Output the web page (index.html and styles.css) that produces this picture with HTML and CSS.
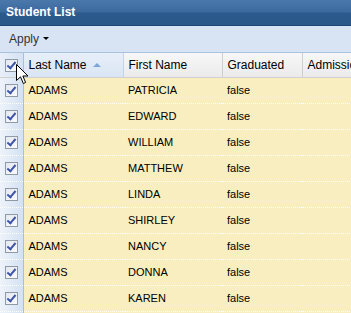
FILE: index.html
```html
<!DOCTYPE html>
<html lang="en">
<head>
  <meta charset="UTF-8" />
  <title>Student List</title>
  <link rel="stylesheet" href="styles.css">
</head>
<body>
  <div class="panel">
    <div class="title">Student List</div>
    <div class="toolbar">
      <span class="apply">Apply <span class="caret"></span></span>
    </div>

    <table class="grid">
      <colgroup>
        <col class="c-check">
        <col class="c-last">
        <col class="c-first">
        <col class="c-grad">
        <col class="c-adm">
      </colgroup>
      <thead>
        <tr>
          <th class="check-cell"><span class="box on"></span></th>
          <th class="sorted">Last Name <span class="sort-arrow"></span></th>
          <th>First Name</th>
          <th>Graduated</th>
          <th>Admission</th>
        </tr>
      </thead>
      <tbody>
        <tr><td class="check-cell"><span class="box on"></span></td><td>ADAMS</td><td>PATRICIA</td><td>false</td><td></td></tr>
        <tr><td class="check-cell"><span class="box on"></span></td><td>ADAMS</td><td>EDWARD</td><td>false</td><td></td></tr>
        <tr><td class="check-cell"><span class="box on"></span></td><td>ADAMS</td><td>WILLIAM</td><td>false</td><td></td></tr>
        <tr><td class="check-cell"><span class="box on"></span></td><td>ADAMS</td><td>MATTHEW</td><td>false</td><td></td></tr>
        <tr><td class="check-cell"><span class="box on"></span></td><td>ADAMS</td><td>LINDA</td><td>false</td><td></td></tr>
        <tr><td class="check-cell"><span class="box on"></span></td><td>ADAMS</td><td>SHIRLEY</td><td>false</td><td></td></tr>
        <tr><td class="check-cell"><span class="box on"></span></td><td>ADAMS</td><td>NANCY</td><td>false</td><td></td></tr>
        <tr><td class="check-cell"><span class="box on"></span></td><td>ADAMS</td><td>DONNA</td><td>false</td><td></td></tr>
        <tr><td class="check-cell"><span class="box on"></span></td><td>ADAMS</td><td>KAREN</td><td>false</td><td></td></tr>
        <tr><td class="check-cell"><span class="box on"></span></td><td>ADAMS</td><td>BETTY</td><td>false</td><td></td></tr>
      </tbody>
    </table>
  </div>

  <!-- mouse pointer over the header checkbox -->
  <svg class="cursor" width="13" height="21" viewBox="0 0 13 21">
    <path d="M0.5 0.5 L0.5 16.5 L4.5 12.8 L7.3 19.5 L9.6 18.5 L6.9 12 L12 12 Z" fill="#fff" stroke="#000" stroke-width="1"/>
  </svg>
</body>
</html>
```

FILE: styles.css
```css
body {
  margin: 0;
  font-family: 'Liberation Sans', Arial, sans-serif;
  font-size: 11px;
  color: #000;
  background: #f9eebf;
  overflow: hidden;
}

.panel {
  width: 351px;
  height: 313px;
  overflow: hidden;
}

.title {
  height: 25px;
  line-height: 24px;
  padding-left: 6px;
  color: #fff;
  font-weight: bold;
  font-size: 12px;
  background: linear-gradient(#4a78ab 0, #3c6a9f 12px, #2c5a8e 13px, #2a5889 100%);
  border-bottom: 1px solid #1d4776;
}

.toolbar {
  height: 26px;
  padding-left: 9px;
  display: flex;
  align-items: center;
  background: #d8e4f3;
  border-bottom: 1px solid #a9c2de;
}

.apply {
  font-size: 12px;
  color: #333;
}

.caret {
  display: inline-block;
  width: 0;
  height: 0;
  margin-left: 1px;
  vertical-align: 3px;
  border-left: 3px solid transparent;
  border-right: 3px solid transparent;
  border-top: 3px solid #000;
}

.grid {
  border-collapse: collapse;
  table-layout: fixed;
  width: 402px;
}

.c-check { width: 23px; }
.c-last { width: 100px; }
.c-first { width: 99px; }
.c-grad { width: 80px; }
.c-adm { width: 100px; }

.grid th {
  height: 24px;
  padding: 0 0 0 5px;
  text-align: left;
  font-weight: normal;
  font-size: 12px;
  white-space: nowrap;
  overflow: hidden;
  background: linear-gradient(#f7f7f7, #ebebeb);
  border-right: 1px solid #d0d0d0;
  border-bottom: 1px solid #d0d0d0;
}

.grid th.sorted {
  background: linear-gradient(#e7eff9, #d9e5f4);
  border-right-color: #c3d3e8;
}

.sort-arrow {
  display: inline-block;
  width: 0;
  height: 0;
  margin-left: 3px;
  vertical-align: 2px;
  border-left: 4px solid transparent;
  border-right: 4px solid transparent;
  border-bottom: 4px solid #7ea6d6;
}

.grid td {
  height: 23px;
  padding: 0 0 2px 5px;
  white-space: nowrap;
  border-bottom: 1px dotted #fff;
}

.grid .check-cell {
  padding: 0;
  text-align: center;
  background: linear-gradient(to right, #eef3fa, #d3e1f3);
  border-right: 1px solid #a8c0de;
}

.grid td.check-cell {
  height: 25px;
}

.grid th.check-cell {
  background: linear-gradient(to right, #e8eff9, #d5e2f3);
}

.box {
  display: inline-block;
  width: 11px;
  height: 11px;
  vertical-align: middle;
  border: 1px solid #8e9aa8;
  background: linear-gradient(135deg, #e4e8ee, #fafbfd);
  position: relative;
}

.box.on::after {
  content: "";
  position: absolute;
  left: 3px;
  top: 0;
  width: 3px;
  height: 7px;
  border-right: 2px solid #3f55a7;
  border-bottom: 2px solid #3f55a7;
  transform: rotate(40deg);
}

.cursor {
  position: absolute;
  left: 16px;
  top: 64px;
}
```
